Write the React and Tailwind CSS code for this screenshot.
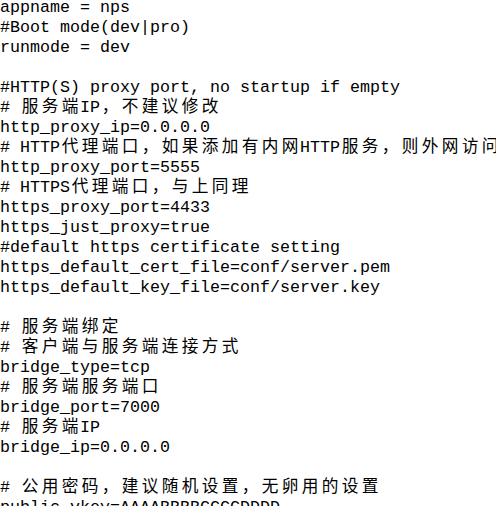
const lines = [
  'appname = nps',
  '#Boot mode(dev|pro)',
  'runmode = dev',
  '',
  '#HTTP(S) proxy port, no startup if empty',
  '# 服务端IP，不建议修改',
  'http_proxy_ip=0.0.0.0',
  '# HTTP代理端口，如果添加有内网HTTP服务，则外网访问',
  'http_proxy_port=5555',
  '# HTTPS代理端口，与上同理',
  'https_proxy_port=4433',
  'https_just_proxy=true',
  '#default https certificate setting',
  'https_default_cert_file=conf/server.pem',
  'https_default_key_file=conf/server.key',
  '',
  '# 服务端绑定',
  '# 客户端与服务端连接方式',
  'bridge_type=tcp',
  '# 服务端服务端口',
  'bridge_port=7000',
  '# 服务端IP',
  'bridge_ip=0.0.0.0',
  '',
  '# 公用密码，建议随机设置，无卵用的设置',
  'public_vkey=AAAABBBBCCCCDDDD',
];

// wide chars take two columns, like in the editor
const isWide = (ch) => /[\u3000-\u9fff\uff00-\uffef]/.test(ch);

const Line = ({ text }) => {
  if (!text) return <div className="h-[20px]"> </div>;
  return (
    <div className="h-[20px]">
      {[...text].map((ch, i) =>
        isWide(ch) ? (
          <span key={i} className="inline-block w-[20px] text-center">{ch}</span>
        ) : (
          <span key={i}>{ch}</span>
        )
      )}
    </div>
  );
};

export default function App() {
  return (
    <div className="w-[496px] h-[506px] overflow-hidden bg-white">
      <pre className="-mt-[2px] font-['Liberation_Mono','Noto_Sans_CJK_SC',monospace] text-[16.67px] leading-[20px] text-black whitespace-pre">
        {lines.map((l, i) => (
          <Line key={i} text={l} />
        ))}
      </pre>
    </div>
  );
}
